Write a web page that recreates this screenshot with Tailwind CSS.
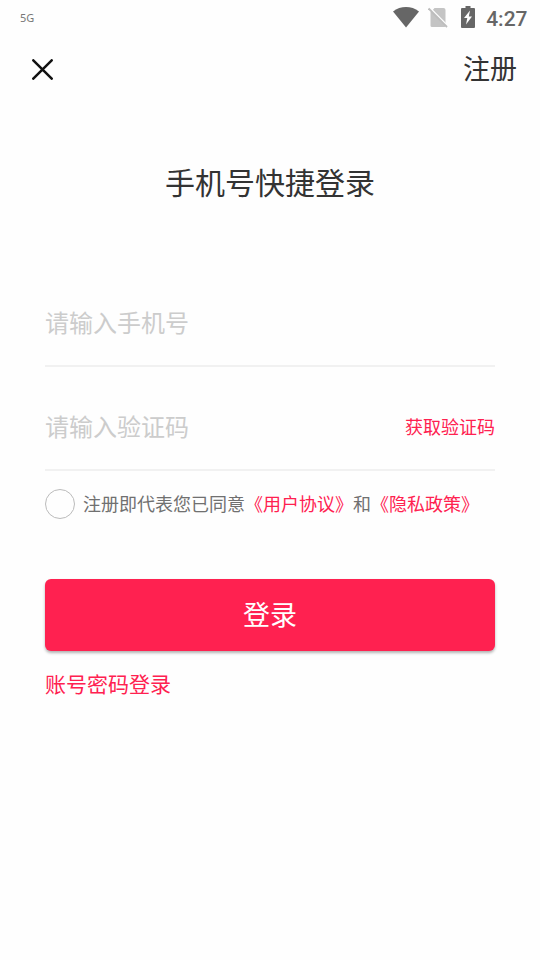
<!DOCTYPE html>
<html lang="zh-CN">
<head>
<meta charset="utf-8">
<title>手机号快捷登录</title>
<script src="https://cdn.jsdelivr.net/npm/@tailwindcss/browser@4"></script>
</head>
<body class="w-[540px] h-[960px] overflow-hidden bg-[#fefefe] font-['Noto_Sans_CJK_SC',sans-serif] text-[#333]">
<div class="h-9 flex items-center justify-between pl-5 pr-3">
  <span class="pb-[2px] text-[11px] leading-none text-[#777] font-['Noto_Sans','Noto_Sans_CJK_SC',sans-serif]">5G</span>
  <div class="flex items-center h-[34px] self-start">
    <svg class="w-[26px] h-[21px]" viewBox="0 0 26 21" fill="#666"><path d="M0 4.4C7.5-1.4 18.500-1.400 26 4.400L13 20.500Z"/></svg>
    <svg class="w-5 h-[21px] ml-[9px]" viewBox="0 0 20 21"><path d="M6.500 1H15.500Q17.500 1 17.500 3V19Q17.500 20 16.500 20H4Q2.500 20 2.500 18.500V5.500Z" fill="#c4c4c4"/><path d="M1.500 .8L20 19.400" stroke="#fefefe" stroke-width="2"/><path d="M.6 1.500L19 20" stroke="#bdbdbd" stroke-width="1.800"/></svg>
    <svg class="w-[14px] h-[22px] ml-[13px]" viewBox="0 0 14 22"><path d="M4.500 0H9.500V2H13Q14 2 14 3V21Q14 22 13 22H1Q0 22 0 21V3Q0 2 1 2H4.500Z" fill="#666"/><path d="M9 4.500L3 12H6.300L5 18.500L11 10.500H7.800Z" fill="#fefefe"/></svg>
    <span class="ml-[11px] mr-[0.5px] text-[21px] leading-none font-medium text-[#666] font-[Roboto,sans-serif] pt-[5px]">4:27</span>
  </div>
</div>
<header class="h-[66px] flex items-center justify-between pl-8 pr-[23px]">
  <button aria-label="关闭"><svg class="w-[21px] h-[21px]" viewBox="0 0 21 21" fill="none" stroke="#111" stroke-width="2.500" stroke-linecap="round"><path d="M1.300 1.300L19.700 19.700M19.700 1.300L1.300 19.700"/></svg></button>
  <span class="text-[27px] leading-10 pb-[2px]">注册</span>
</header>
<main class="px-[45px]">
  <h1 class="pt-[57px] text-[30px] leading-[44px] text-center">手机号快捷登录</h1>
  <div class="mt-[78px] h-[86px] pb-[2px] flex items-center border-b-2 border-[#f1f1f1]">
    <span class="text-[24px] leading-9 text-[#ccc]">请输入手机号</span>
  </div>
  <div class="h-[104px] pt-4 flex items-center justify-between border-b-2 border-[#f1f1f1]">
    <span class="text-[24px] leading-9 text-[#ccc]">请输入验证码</span>
    <span class="text-[18px] leading-7 text-[#ff2150]">获取验证码</span>
  </div>
  <div class="mt-[18px] h-[30px] flex items-center gap-2 text-[18px] whitespace-nowrap">
    <span class="w-[30px] h-[30px] shrink-0 rounded-full border border-[#bbb]"></span>
    <span class="pb-[2px] text-[#707070]">注册即代表您已同意<span class="text-[#ff2150]">《用户协议》</span>和<span class="text-[#ff2150]">《隐私政策》</span></span>
  </div>
  <button class="mt-[60px] w-full h-[72px] rounded-md bg-[#ff2150] text-white text-[27px] leading-[70px] pb-[2px] flex items-center justify-center shadow-[0_2px_3px_rgba(0,0,0,0.3)]">登录</button>
  <div class="mt-4 text-[21px] leading-8 text-[#ff2150]">账号密码登录</div>
</main>
</body>
</html>
